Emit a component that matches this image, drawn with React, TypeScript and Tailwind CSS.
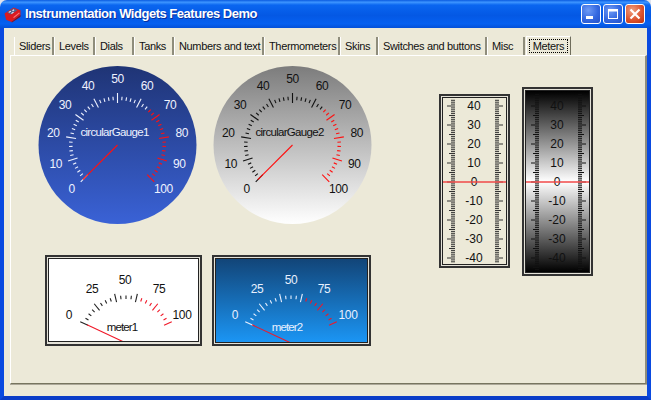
import { useId } from "react";

const tabs = [
  { label: "Sliders", width: "w-[40px]" },
  { label: "Levels", width: "w-[41px]" },
  { label: "Dials", width: "w-[39px]" },
  { label: "Tanks", width: "w-[40px]" },
  { label: "Numbers and text", width: "w-[90px]" },
  { label: "Thermometers", width: "w-[76px]" },
  { label: "Skins", width: "w-[38px]" },
  { label: "Switches and buttons", width: "w-[109px]" },
  { label: "Misc", width: "w-[38px]" },
];

function polar(cx: number, cy: number, r: number, deg: number) {
  const a = (deg * Math.PI) / 180;
  return [cx + r * Math.sin(a), cy - r * Math.cos(a)];
}

function Tick({ cx, cy, r1, r2, deg, color, width = 1 }: { cx: number; cy: number; r1: number; r2: number; deg: number; color: string; width?: number }) {
  const [x1, y1] = polar(cx, cy, r1, deg);
  const [x2, y2] = polar(cx, cy, r2, deg);
  return <line x1={x1} y1={y1} x2={x2} y2={y2} stroke={color} strokeWidth={width} />;
}

function CircularGauge({ name, from, to, ink, tick }: { name: string; from: string; to: string; ink: string; tick: string }) {
  const id = useId();
  const cx = 79.5;
  const cy = 79;
  const items = [];
  for (let v = 0; v <= 100; v += 2) {
    const deg = -135 + v * 2.7;
    const major = v % 10 === 0;
    items.push(
      <Tick
        key={v}
        cx={cx}
        cy={cy}
        r1={major ? 42 : 45}
        r2={major ? 52 : 48.5}
        deg={deg}
        color={v > 65 ? "#ff1010" : tick}
        width={1.1}
      />,
    );
  }
  const [nx, ny] = polar(cx, cy, 49, -135);
  return (
    <svg width="159" height="159" viewBox="0 0 159 159" className="block shrink-0">
      <defs>
        <linearGradient id={id} x1="0" y1="0" x2="0" y2="1">
          <stop offset="0" stopColor={from} />
          <stop offset="1" stopColor={to} />
        </linearGradient>
      </defs>
      <circle cx={cx} cy={cy} r="79" fill={`url(#${id})`} />
      {items}
      <line x1={cx} y1={cy} x2={nx} y2={ny} stroke="#ff1010" strokeWidth="1.1" />
      {[0, 10, 20, 30, 40, 50, 60, 70, 80, 90, 100].map((v) => {
        const [x, y] = polar(cx, cy, 65, -135 + v * 2.7);
        return (
          <text key={v} x={x} y={y + 2.5} textAnchor="middle" fill={ink} className="font-['Liberation_Sans'] text-[12px] tracking-[-0.4px]">
            {v}
          </text>
        );
      })}
      <text x={cx - 3} y="69.5" textAnchor="middle" fill={ink} className="font-['Liberation_Sans'] text-[11.5px] tracking-[-0.7px]">
        {name}
      </text>
    </svg>
  );
}

function Meter({ name, w, h, cx, ink, tick, bg, shift }: { name: string; w: number; h: number; cx: number; ink: string; tick: string; bg: string; shift: number }) {
  const cy = 84;
  const items = [];
  for (let v = 0; v <= 100; v += 5) {
    const deg = -65 + v * 1.3;
    const major = v % 20 === 0;
    items.push(
      <Tick
        key={v}
        cx={cx}
        cy={cy}
        r1={major ? 42 : 44}
        r2={major ? 50.5 : 47.5}
        deg={deg}
        color={v > 60 ? "#f01828" : tick}
        width={1.1}
      />,
    );
  }
  const labels = [
    { t: "0", dx: -57 + shift, y: 56 },
    { t: "25", dx: -34, y: 30 },
    { t: "50", dx: -1 + shift, y: 21 },
    { t: "75", dx: 33, y: 30 },
    { t: "100", dx: 56 + shift, y: 56 },
  ];
  const [nx, ny] = polar(cx, cy, 43, -65);
  return (
    <div className="shrink-0 border-2 border-[#333333] bg-[#e4e2d8] p-px">
      <div className={`border border-[#222222] ${bg}`}>
        <svg width={w} height={h} viewBox={`0 0 ${w} ${h}`} className="block">
          {items}
          <line x1={cx} y1={cy} x2={nx} y2={ny} stroke="#f01828" strokeWidth="1.1" />
          {labels.map((l) => (
            <text key={l.t} x={cx + l.dx} y={l.y + 3.5} textAnchor="middle" fill={ink} className="font-['Liberation_Sans'] text-[12px] tracking-[-0.4px]">
              {l.t}
            </text>
          ))}
          <text x={cx - 4} y="72" textAnchor="middle" fill={ink} className="font-['Liberation_Sans'] text-[11.5px] tracking-[-0.9px]">
            {name}
          </text>
        </svg>
      </div>
    </div>
  );
}

function LinearScale({ w, h, top, left, right, mid, bg, tick, ink }: { w: number; h: number; top: number; left: number; right: number; mid: number; bg: string; tick: string; ink: string }) {
  // value 0 sits at y = zero, 1.9px per unit
  const zero = top + 76;
  const lines = [];
  const span = Math.floor((h - 2 - zero) / 1.9);
  const spanUp = Math.floor((zero - 2) / 1.9);
  for (let v = -span; v <= spanUp; v++) {
    const y = zero - v * 1.9;
    const major = v % 10 === 0;
    const half = v % 5 === 0;
    const out = major ? 4 : half ? 2 : 0;
    lines.push(<line key={`l${v}`} x1={left - 2 - out} x2={left + 2} y1={y} y2={y} stroke={tick} strokeWidth="1" />);
    lines.push(<line key={`r${v}`} x1={right - 2} x2={right + 2 + out} y1={y} y2={y} stroke={tick} strokeWidth="1" />);
  }
  return (
    <div className="border-2 border-[#333333] bg-[#e4e2d8] p-px">
      <div className={`border border-[#222222] ${bg}`}>
        <svg width={w} height={h} viewBox={`0 0 ${w} ${h}`} className="block">
          {lines}
          {[40, 30, 20, 10, 0, -10, -20, -30, -40].map((v) => (
            <text key={v} x={mid} y={zero - v * 1.9 + 3.5} textAnchor="middle" fill={ink} className="font-['Liberation_Sans'] text-[12px]">
              {v}
            </text>
          ))}
          <line x1="0" x2={w} y1={zero} y2={zero} stroke="#f04848" strokeWidth="1.4" />
        </svg>
      </div>
    </div>
  );
}

function AppIcon() {
  return (
    <svg width="17" height="17" viewBox="0 0 16 16" className="shrink-0">
      <path d="M0.5 7 L9 1.5 L15.5 4 L15.5 8.5 L7 15 L2 13 Z" fill="#dc1a20" />
      <path d="M7 15 L15.5 8.5 L15.5 10 L7.5 15.5 Z" fill="#8a0c10" />
      <path d="M3 6 L9 2 L12.5 4 L6.5 8 Z" fill="#54608a" />
      <path d="M4.5 6 L6.5 4.8 M8 4.5 L9.5 3.5 M7 7 L9 5.8" stroke="#eef0f8" strokeWidth="1" />
      <path d="M9 11 L14.5 6.5" stroke="#f58080" strokeWidth="1" />
    </svg>
  );
}

function CaptionButton({ kind }: { kind: "min" | "max" | "close" }) {
  const tone =
    kind === "close"
      ? "bg-[radial-gradient(circle_at_35%_30%,#f0a080,#dd5530_55%,#b83010)]"
      : "bg-[radial-gradient(circle_at_35%_30%,#6f9bf5,#3468e0_55%,#2450c8)]";
  return (
    <div className={`flex size-[20px] items-center justify-center rounded-[3px] border border-white ${tone}`}>
      <svg width="14" height="14" viewBox="0 0 14 14">
        {kind === "min" && <rect x="2" y="9" width="7" height="3" fill="#fff" />}
        {kind === "max" && (
          <>
            <rect x="2.5" y="2.5" width="9" height="9" fill="none" stroke="#fff" strokeWidth="1" />
            <rect x="2" y="2" width="10" height="2.5" fill="#fff" />
          </>
        )}
        {kind === "close" && <path d="M2.5 2.5 L11.5 11.5 M11.5 2.5 L2.5 11.5" stroke="#fff" strokeWidth="2.2" />}
      </svg>
    </div>
  );
}

export default function App() {
  return (
    <div className="flex h-[400px] w-[651px] flex-col overflow-hidden bg-[#dfe3ee] font-['Liberation_Sans',sans-serif]">
      <div className="flex h-[28px] shrink-0 items-center rounded-t-[7px] bg-[linear-gradient(180deg,#0a5be0_0%,#3d95ff_8%,#0a66f0_18%,#0458e4_55%,#0660f0_85%,#0450d8_100%)] pl-[4px] pr-[6px]">
        <AppIcon />
        <span className="ml-[4px] text-[13px] font-bold tracking-[-0.48px] whitespace-nowrap text-white [text-shadow:1px_1px_0_#0a2f9c]">
          Instrumentation Widgets Features Demo
        </span>
        <div className="ml-auto flex gap-[2px]">
          <CaptionButton kind="min" />
          <CaptionButton kind="max" />
          <CaptionButton kind="close" />
        </div>
      </div>

      <div className="flex min-h-0 flex-1 flex-col border-x-[4px] border-b-[4px] border-x-[#0a4ae0] border-b-[#0a3cc8] bg-[#ece9d8] pl-[6px]">
        <div className="z-10 mt-[8px] flex h-[19px] shrink-0 pl-[4px] text-[11px] tracking-[-0.35px] text-[#111]">
          {tabs.map((tab) => (
            <div key={tab.label} className={`${tab.width} mt-[1px] h-[18px] whitespace-nowrap border-r-2 border-l border-r-[#8f8d7c] border-l-white pl-[4px] leading-[19px]`}>
              {tab.label}
            </div>
          ))}
          <div className="ml-[1px] h-[19px] w-[45px] border-x border-t border-white border-r-[#6f6d5c] bg-[#ece9d8] p-[2px]">
            <div className="h-[14px] border border-dotted border-black text-center leading-[12px]">Meters</div>
          </div>
        </div>

        <div className="flex h-[329px] shrink-0 border-y border-t-white border-b-[#77755f] border-l border-l-white border-r-2 border-r-[#8f8d7c] shadow-[0_1px_0_#aca899]">
          <div className="ml-[27px] mt-[10px] w-[333px] shrink-0">
            <div className="flex gap-[16px]">
              <CircularGauge name="circularGauge1" from="#1f3475" to="#3a62d6" ink="#eef2ff" tick="#eef2ff" />
              <CircularGauge name="circularGauge2" from="#7c7c7c" to="#ffffff" ink="#111111" tick="#111111" />
            </div>
            <div className="ml-[7px] mt-[30px] flex gap-[10px]">
              <Meter name="meter1" w={149} h={82} cx={77} ink="#111111" tick="#222222" bg="bg-white" shift={0} />
              <Meter name="meter2" w={151} h={83} cx={75} ink="#e8f0ff" tick="#e8f0ff" bg="bg-[linear-gradient(180deg,#124578,#1b95f4)]" shift={1} />
            </div>
          </div>
          <div className="ml-[68px] mt-[38px] shrink-0">
            <LinearScale w={63} h={166} top={8} left={10} right={54} mid={31} bg="bg-[#ece9d8]" tick="#333333" ink="#111111" />
          </div>
          <div className="ml-[12px] mt-[31px] shrink-0">
            <LinearScale w={63} h={181} top={15} left={11} right={54} mid={31} bg="bg-[linear-gradient(180deg,#000_0%,#fff_50%,#000_100%)]" tick="#111111" ink="#111111" />
          </div>
        </div>
      </div>
    </div>
  );
}
